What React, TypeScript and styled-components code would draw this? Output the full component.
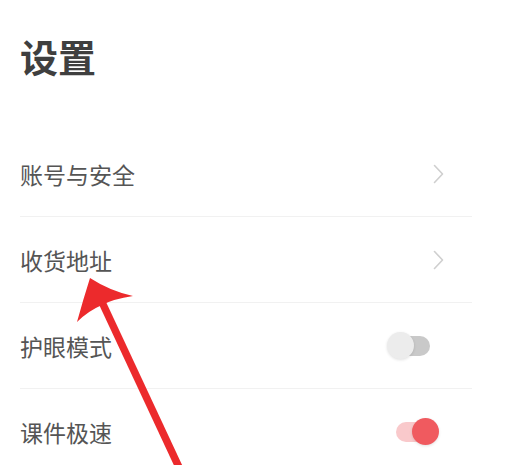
import styled, { createGlobalStyle } from "styled-components";

const GlobalStyle = createGlobalStyle`
  html, body {
    margin: 0;
    padding: 0;
    background: #ffffff;
  }
  body {
    font-family: "Noto Sans CJK SC", "Noto Sans", sans-serif;
    overflow: hidden;
  }
`;

type Item =
  | { label: string; kind: "link" }
  | { label: string; kind: "toggle"; on: boolean };

const items: Item[] = [
  { label: "账号与安全", kind: "link" },
  { label: "收货地址", kind: "link" },
  { label: "护眼模式", kind: "toggle", on: false },
  { label: "课件极速", kind: "toggle", on: true },
];

export default function App() {
  return (
    <Page>
      <GlobalStyle />
      <Title>设置</Title>
      <List>
        {items.map((it) => (
          <Row key={it.label}>
            <Label>{it.label}</Label>
            {it.kind === "link" ? (
              <Chevron width="11" height="20" viewBox="0 0 11 20">
                <polyline
                  points="1.5,1.5 9.5,10 1.5,18.5"
                  fill="none"
                  stroke="#cfcfcf"
                  strokeWidth="1.6"
                  strokeLinecap="round"
                  strokeLinejoin="round"
                />
              </Chevron>
            ) : (
              <Switch $on={it.on}>
                <Knob $on={it.on} />
              </Switch>
            )}
          </Row>
        ))}
      </List>

      {/* annotation arrow drawn over the screenshot */}
      <Arrow width="515" height="465" viewBox="0 0 515 465">
        <line
          x1="101"
          y1="300"
          x2="184"
          y2="478"
          stroke="#ec2a2c"
          strokeWidth="7.5"
        />
        <path
          d="M90 278 Q110 291 133 296 Q113 299 102 305 Q88 311 77 322 Q83 300 90 278 Z"
          fill="#ec2a2c"
        />
      </Arrow>
    </Page>
  );
}

/* ---------------- styled ---------------- */
const Page = styled.div`
  position: relative;
  width: 515px;
  height: 465px;
  padding: 0 0 0 20px;
  box-sizing: border-box;
  overflow: hidden;
`;

const Title = styled.h1`
  margin: 0;
  padding-top: 31px;
  height: 96px;
  box-sizing: border-box;
  font-size: 38px;
  line-height: 50px;
  font-weight: 700;
  color: #3f3f3f;
  letter-spacing: 0;
`;

const List = styled.div`
  width: 452px;
  margin-top: 35px;
`;

const Row = styled.div`
  display: flex;
  align-items: center;
  justify-content: space-between;
  height: 86px;
  padding-top: 0;
  box-sizing: border-box;
  border-bottom: 1px solid #f1f1f1;
`;

const Label = styled.span`
  font-size: 23px;
  line-height: 30px;
  color: #555555;
`;

const Chevron = styled.svg`
  margin-right: 28px;
  display: block;
`;

const Switch = styled.div<{ $on: boolean }>`
  position: relative;
  width: 34px;
  height: 20px;
  margin-right: 42px;
  border-radius: 10px;
  background: ${({ $on }) => ($on ? "#f9c9cb" : "#c9c9c9")};
`;

const Knob = styled.div<{ $on: boolean }>`
  position: absolute;
  top: -4px;
  left: ${({ $on }) => ($on ? "16px" : "-9px")};
  width: 27px;
  height: 27px;
  border-radius: 50%;
  background: ${({ $on }) => ($on ? "#f05a5f" : "#ececec")};
  box-shadow: 0 1px 3px rgba(0, 0, 0, 0.12);
`;

const Arrow = styled.svg`
  position: absolute;
  left: 0;
  top: 0;
  pointer-events: none;
`;
